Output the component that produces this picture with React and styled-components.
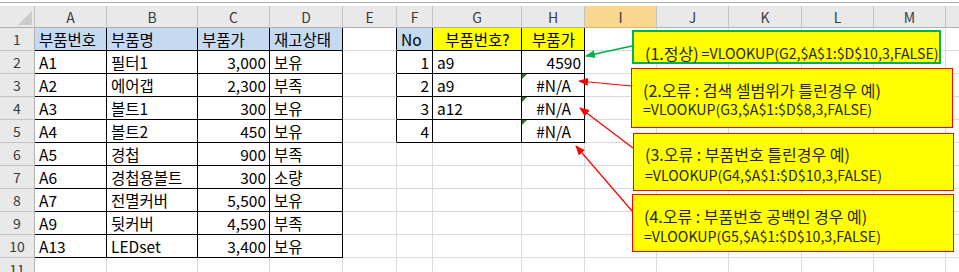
import React from 'react';
import styled, { createGlobalStyle } from 'styled-components';

const GlobalStyle = createGlobalStyle`
  html, body {
    margin: 0;
    padding: 0;
    background: #fff;
    overflow: hidden;
  }
`;

const COLS = [
  { key: 'A', w: 72 },
  { key: 'B', w: 91 },
  { key: 'C', w: 72 },
  { key: 'D', w: 73 },
  { key: 'E', w: 54 },
  { key: 'F', w: 36 },
  { key: 'G', w: 89 },
  { key: 'H', w: 63 },
  { key: 'I', w: 72 },
  { key: 'J', w: 72 },
  { key: 'K', w: 73 },
  { key: 'L', w: 72 },
  { key: 'M', w: 72 },
  { key: 'N', w: 40 },
];

const ROW_COUNT = 11;
const GRID = '#dadada';
const LINE = '#000';

const parts = [
  ['부품번호', '부품명', '부품가', '재고상태'],
  ['A1', '필터1', '3,000', '보유'],
  ['A2', '에어갭', '2,300', '부족'],
  ['A3', '볼트1', '300', '보유'],
  ['A4', '볼트2', '450', '보유'],
  ['A5', '경첩', '900', '부족'],
  ['A6', '경첩용볼트', '300', '소량'],
  ['A7', '전멸커버', '5,500', '보유'],
  ['A9', '뒷커버', '4,590', '부족'],
  ['A13', 'LEDset', '3,400', '보유'],
];

const lookup = [
  ['No', '부품번호?', '부품가'],
  ['1', 'a9', '4590'],
  ['2', 'a9', '#N/A'],
  ['3', 'a12', '#N/A'],
  ['4', '', '#N/A'],
];

// callout boxes next to the lookup table
const notes = [
  { top: 30, left: 632, w: 309, h: 34, ok: true, pad: 11, gap: 0, title: '(1.정상)', formula: '=VLOOKUP(G2,$A$1:$D$10,3,FALSE)', inline: true },
  { top: 68, left: 631, w: 322, h: 60, pad: 11, gap: 0, title: '(2.오류 : 검색 셀범위가 틀린경우 예)', formula: '=VLOOKUP(G3,$A$1:$D$8,3,FALSE)' },
  { top: 133, left: 633, w: 321, h: 58, pad: 7, gap: 5, title: '(3.오류 : 부품번호 틀린경우 예)', formula: '=VLOOKUP(G4,$A$1:$D$10,3,FALSE)' },
  { top: 194, left: 632, w: 322, h: 58, pad: 9, gap: 3, title: '(4.오류 : 부품번호 공백인 경우 예)', formula: '=VLOOKUP(G5,$A$1:$D$10,3,FALSE)' },
];

const arrows = [
  { x1: 632, y1: 46, x2: 586, y2: 56, color: '#00b050' },
  { x1: 631, y1: 86, x2: 579, y2: 81, color: '#ff0000' },
  { x1: 633, y1: 148, x2: 580, y2: 108, color: '#ff0000' },
  { x1: 632, y1: 211, x2: 576, y2: 146, color: '#ff0000' },
];

const Sheet = styled.div`
  position: relative;
  width: 959px;
  height: 272px;
  overflow: hidden;
  font-family: 'Noto Sans CJK KR', 'Noto Sans', sans-serif;
`;

const TopStrip = styled.div`
  height: 2px;
  border-bottom: 1px solid #b4b4b4;
  margin-bottom: 3px;
`;

const Grid = styled.div`
  display: grid;
  grid-template-columns: 35px ${COLS.map((c) => `${c.w}px`).join(' ')};
  grid-template-rows: 22px repeat(${ROW_COUNT}, 23px);
`;

const Corner = styled.div`
  position: relative;
  background: #e9e9e9;
  border-right: 1px solid #c3c3c3;
  border-bottom: 1px solid #b0b0b0;

  &::after {
    content: '';
    position: absolute;
    right: 2px;
    bottom: 2px;
    border-style: solid;
    border-width: 0 0 14px 14px;
    border-color: transparent transparent #cacaca transparent;
  }
`;

const ColHead = styled.div`
  display: flex;
  align-items: center;
  justify-content: center;
  background: ${(p) => (p.$active ? '#f8d88f' : '#e9e9e9')};
  border-right: 1px solid #c3c3c3;
  border-bottom: 1px solid ${(p) => (p.$active ? '#f2b34e' : '#b0b0b0')};
  color: #3b3b3b;
  font-size: 14px;
`;

const RowHead = styled.div`
  display: flex;
  align-items: center;
  justify-content: center;
  background: #e9e9e9;
  border-right: 1px solid #b0b0b0;
  border-bottom: 1px solid #c3c3c3;
  color: #3b3b3b;
  font-size: 14px;
`;

const Cell = styled.div`
  position: relative;
  display: flex;
  align-items: center;
  justify-content: ${(p) => p.$align};
  padding: 0 3px 0 4px;
  background: ${(p) => p.$bg};
  border-right: 1px solid ${(p) => p.$right};
  border-bottom: 1px solid ${(p) => p.$bottom};
  color: #000;
  font-size: 15.5px;
  white-space: nowrap;

  &::before {
    content: '';
    display: ${(p) => (p.$flag ? 'block' : 'none')};
    position: absolute;
    left: 0;
    top: 0;
    border-style: solid;
    border-width: 5px 5px 0 0;
    border-color: #1f7a1f transparent transparent transparent;
  }
`;

const Overlay = styled.svg`
  position: absolute;
  left: 0;
  top: 0;
  pointer-events: none;
`;

const Note = styled.div`
  position: absolute;
  box-sizing: border-box;
  background: #ffff00;
  border: ${(p) => (p.$ok ? '2px solid #00b050' : '1px solid #ff0000')};
  padding: ${(p) => p.$pad}px 0 0 11px;
  color: #262600;
  white-space: nowrap;
`;

const NoteLine = styled.div`
  display: flex;
  align-items: center;
  gap: 3px;
  height: ${(p) => p.$h}px;
  line-height: 1;
`;

const Title = styled.span`
  font-size: 16px;
`;

const Formula = styled.span`
  font-size: 14.2px;
`;

function cellFor(r, ci) {
  const col = COLS[ci].key;
  let text = '';
  let align = 'flex-start';
  let bg = 'transparent';
  let right = GRID;
  let bottom = GRID;
  let flag = false;

  if (ci <= 3 && r <= 10) {
    text = parts[r - 1][ci];
    if (ci === 2 && r > 1) align = 'flex-end';
    if (r === 1) bg = '#c5d9f1';
    right = LINE;
    bottom = LINE;
  }
  if (col === 'E' && r <= 5) right = LINE;
  if (ci >= 5 && ci <= 7 && r <= 5) {
    const v = lookup[r - 1][ci - 5];
    text = v;
    right = LINE;
    bottom = LINE;
    if (r === 1) {
      bg = ci === 5 ? '#c5d9f1' : '#ffff00';
      if (ci > 5) align = 'center';
    } else if (ci === 5) {
      align = 'flex-end';
    } else if (ci === 7) {
      align = v === '#N/A' ? 'center' : 'flex-end';
      flag = v === '#N/A';
    }
  }

  return (
    <Cell key={`${col}${r}`} $align={align} $bg={bg} $right={right} $bottom={bottom} $flag={flag}>
      {text}
    </Cell>
  );
}

export default function App() {
  const cells = [];
  cells.push(<Corner key="corner" />);
  COLS.forEach((c) => {
    cells.push(
      <ColHead key={c.key} $active={c.key === 'I'}>
        {c.key === 'N' ? '' : c.key}
      </ColHead>
    );
  });
  for (let r = 1; r <= ROW_COUNT; r++) {
    cells.push(<RowHead key={`r${r}`}>{r}</RowHead>);
    COLS.forEach((_, ci) => cells.push(cellFor(r, ci)));
  }

  return (
    <Sheet>
      <GlobalStyle />
      <TopStrip />
      <Grid>{cells}</Grid>

      {notes.map((n, i) => (
        <Note
          key={i}
          style={{ top: n.top, left: n.left, width: n.w, height: n.h }}
          $ok={n.ok}
          $pad={n.pad}
        >
          {n.inline ? (
            <NoteLine $h={20}>
              <Title>{n.title}</Title>
              <Formula>{n.formula}</Formula>
            </NoteLine>
          ) : (
            <>
              <NoteLine $h={20 + n.gap}>
                <Title>{n.title}</Title>
              </NoteLine>
              <NoteLine $h={18}>
                <Formula>{n.formula}</Formula>
              </NoteLine>
            </>
          )}
        </Note>
      ))}

      <Overlay width="959" height="272">
        <defs>
          <marker id="headGreen" markerWidth="10" markerHeight="8" refX="9" refY="4" orient="auto" markerUnits="userSpaceOnUse">
            <path d="M0,0 L10,4 L0,8 Z" fill="#00b050" />
          </marker>
          <marker id="headRed" markerWidth="10" markerHeight="8" refX="9" refY="4" orient="auto" markerUnits="userSpaceOnUse">
            <path d="M0,0 L10,4 L0,8 Z" fill="#ff0000" />
          </marker>
        </defs>
        {arrows.map((a, i) => (
          <line
            key={i}
            x1={a.x1}
            y1={a.y1}
            x2={a.x2}
            y2={a.y2}
            stroke={a.color}
            strokeWidth={a.color === '#00b050' ? 1.6 : 1.2}
            markerEnd={`url(#${a.color === '#00b050' ? 'headGreen' : 'headRed'})`}
          />
        ))}
      </Overlay>
    </Sheet>
  );
}
